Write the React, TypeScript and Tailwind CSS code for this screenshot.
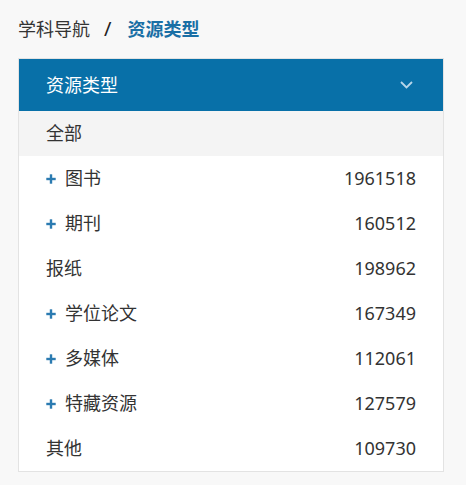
import React from "react";

const rows: { label: string; count?: string; plus?: boolean }[] = [
  { label: "图书", count: "1961518", plus: true },
  { label: "期刊", count: "160512", plus: true },
  { label: "报纸", count: "198962" },
  { label: "学位论文", count: "167349", plus: true },
  { label: "多媒体", count: "112061", plus: true },
  { label: "特藏资源", count: "127579", plus: true },
  { label: "其他", count: "109730" },
];

function Plus() {
  return (
    <svg width="10" height="10" viewBox="0 0 10 10" className="mr-[9px] shrink-0">
      <rect x="0.3" y="3.8" width="9.4" height="2.4" fill="#2b7bb1" />
      <rect x="3.8" y="0.3" width="2.4" height="9.4" fill="#2b7bb1" />
    </svg>
  );
}

export default function App() {
  return (
    <div
      className="min-h-[485px] w-[466px] bg-[#f8f8f8] px-[18px] text-[18px] text-[#333]"
      style={{ fontFamily: '"Noto Sans", "Noto Sans CJK SC", sans-serif' }}
    >
      <div className="flex h-[58px] items-center leading-none">
        <span className="text-[#333]">学科导航</span>
        <span className="ml-[14px] text-[20px] text-[#222]">/</span>
        <span className="ml-[16px] font-bold text-[#1a6fa5]">资源类型</span>
      </div>
      <div className="w-[426px] border border-[#e3e3e3] bg-white">
        <div className="flex h-[52px] items-center justify-between bg-[#0870a8] pl-[27px] pr-[30px] text-white">
          <span>资源类型</span>
          <svg width="13" height="8" viewBox="0 0 13 8" fill="none">
            <path d="M1 1l5.5 5.5L12 1" stroke="#b7d6ea" strokeWidth="1.8" />
          </svg>
        </div>
        <div className="flex h-[45px] items-center bg-[#f4f4f4] px-[27px]">全部</div>
        {rows.map((r) => (
          <div key={r.label} className="flex h-[45px] items-center justify-between px-[27px]">
            <span className="flex items-center">
              {r.plus && <Plus />}
              {r.label}
            </span>
            <span>{r.count}</span>
          </div>
        ))}
      </div>
    </div>
  );
}
